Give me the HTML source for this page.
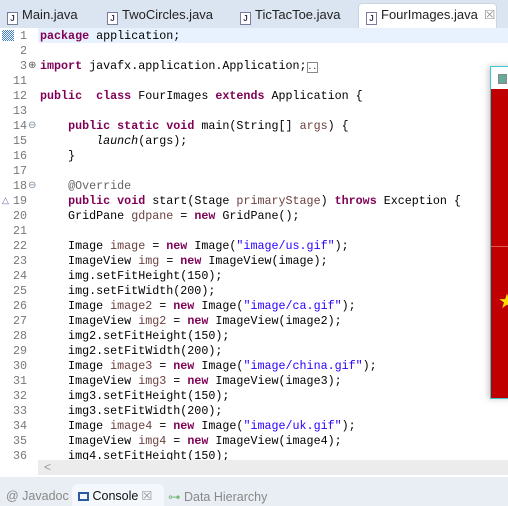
<!DOCTYPE html><html><head><style>
body{margin:0;width:508px;height:506px;overflow:hidden;background:#e9eef5;font-family:"Liberation Sans",sans-serif;position:relative}
.tabs{position:absolute;left:0;top:0;width:508px;height:28px;background:#dbe5f1;border-bottom:1px solid #c9d5e3}
.tab{position:absolute;top:7px;font-size:13px;color:#222;white-space:nowrap}
.ic{display:inline-block;width:9px;height:11px;border:1px solid #7a7a9a;background:#fff;vertical-align:-2px;margin-right:4px;font-size:8px;line-height:11px;text-align:center;color:#335;font-weight:bold}
.act{position:absolute;left:358px;top:3px;width:137px;height:26px;background:#fff;border:1px solid #c9d5e3;border-bottom:none;border-radius:4px 4px 0 0}
.ed{position:absolute;left:0;top:28px;width:508px;height:449px;background:#fff}
.hl{position:absolute;left:38px;top:0;width:470px;height:15px;background:#e8f2fe}
.code{position:absolute;left:0;top:1px;font-family:"Liberation Mono",monospace;font-size:11.7px;line-height:15px}
.n{position:absolute;left:0;width:27px;text-align:right;color:#787878}
.c{position:absolute;left:40px;white-space:pre}
.row{position:relative;height:15px}
.k{color:#7f0055;font-weight:bold}.s{color:#2a00ff}.v{color:#6a3e3e}.a{color:#646464}
.sb{position:absolute;left:38px;top:432px;width:470px;height:15px;background:#ececec;color:#999;font-size:12px;line-height:15px;padding-left:6px;box-sizing:border-box}
.win{position:absolute;left:490px;top:66px;width:30px;height:331px;border:1px solid #3cc8d0;background:#fff;box-shadow:-2px 0 6px rgba(0,0,0,.2)}
.red{position:absolute;left:0;top:22px;width:100%;height:309px;background:#c00000}
.bot{position:absolute;left:0;top:489px;font-size:12.5px;color:#888;white-space:nowrap}
</style></head><body>
<div class="tabs">
<div class="act"></div>
<div class="tab" style="left:7px"><span class="ic">J</span>Main.java</div>
<div class="tab" style="left:107px"><span class="ic">J</span>TwoCircles.java</div>
<div class="tab" style="left:240px"><span class="ic">J</span>TicTacToe.java</div>
<div class="tab" style="left:366px"><span class="ic">J</span>FourImages.java <span style="color:#888;margin-left:3px">⮽</span></div>
</div>
<div class="ed">
<div class="hl"></div>
<div style="position:absolute;left:2px;top:2px;width:12px;height:11px;background:repeating-conic-gradient(#3a7fd0 0 25%,#fff 0 50%) 0 0/2px 2px"></div>
<div class="code">
<div class="row"><span class="n">1</span><span class="c"><span class="k">package</span> application;</span></div>
<div class="row"><span class="n">2</span></div>
<div class="row"><span class="n">3</span><span style="position:absolute;left:28px;color:#555;font-size:10px">⊕</span><span class="c"><span class="k">import</span> javafx.application.Application;<span style="border:1px solid #888;font-size:8px">..</span></span></div>
<div class="row"><span class="n">11</span></div>
<div class="row"><span class="n">12</span><span class="c"><span class="k">public</span>  <span class="k">class</span> FourImages <span class="k">extends</span> Application {</span></div>
<div class="row"><span class="n">13</span></div>
<div class="row"><span class="n">14</span><span style="position:absolute;left:28px;color:#789;font-size:10px">⊖</span><span class="c">    <span class="k">public</span> <span class="k">static</span> <span class="k">void</span> main(String[] <span class="v">args</span>) {</span></div>
<div class="row"><span class="n">15</span><span class="c">        <i>launch</i>(args);</span></div>
<div class="row"><span class="n">16</span><span class="c">    }</span></div>
<div class="row"><span class="n">17</span></div>
<div class="row"><span class="n">18</span><span style="position:absolute;left:28px;color:#789;font-size:10px">⊖</span><span class="c">    <span class="a">@Override</span></span></div>
<div class="row"><span class="n">19</span><span style="position:absolute;left:2px;color:#6060b0;font-size:9px">△</span><span class="c">    <span class="k">public</span> <span class="k">void</span> start(Stage <span class="v">primaryStage</span>) <span class="k">throws</span> Exception {</span></div>
<div class="row"><span class="n">20</span><span class="c">    GridPane <span class="v">gdpane</span> = <span class="k">new</span> GridPane();</span></div>
<div class="row"><span class="n">21</span></div>
<div class="row"><span class="n">22</span><span class="c">    Image <span class="v">image</span> = <span class="k">new</span> Image(<span class="s">"image/us.gif"</span>);</span></div>
<div class="row"><span class="n">23</span><span class="c">    ImageView <span class="v">img</span> = <span class="k">new</span> ImageView(image);</span></div>
<div class="row"><span class="n">24</span><span class="c">    img.setFitHeight(150);</span></div>
<div class="row"><span class="n">25</span><span class="c">    img.setFitWidth(200);</span></div>
<div class="row"><span class="n">26</span><span class="c">    Image <span class="v">image2</span> = <span class="k">new</span> Image(<span class="s">"image/ca.gif"</span>);</span></div>
<div class="row"><span class="n">27</span><span class="c">    ImageView <span class="v">img2</span> = <span class="k">new</span> ImageView(image2);</span></div>
<div class="row"><span class="n">28</span><span class="c">    img2.setFitHeight(150);</span></div>
<div class="row"><span class="n">29</span><span class="c">    img2.setFitWidth(200);</span></div>
<div class="row"><span class="n">30</span><span class="c">    Image <span class="v">image3</span> = <span class="k">new</span> Image(<span class="s">"image/china.gif"</span>);</span></div>
<div class="row"><span class="n">31</span><span class="c">    ImageView <span class="v">img3</span> = <span class="k">new</span> ImageView(image3);</span></div>
<div class="row"><span class="n">32</span><span class="c">    img3.setFitHeight(150);</span></div>
<div class="row"><span class="n">33</span><span class="c">    img3.setFitWidth(200);</span></div>
<div class="row"><span class="n">34</span><span class="c">    Image <span class="v">image4</span> = <span class="k">new</span> Image(<span class="s">"image/uk.gif"</span>);</span></div>
<div class="row"><span class="n">35</span><span class="c">    ImageView <span class="v">img4</span> = <span class="k">new</span> ImageView(image4);</span></div>
<div class="row"><span class="n">36</span><span class="c">    img4.setFitHeight(150);</span></div>
</div>
<div class="sb">&lt;</div>
</div>
<div class="win"><div style="position:absolute;left:7px;top:7px;width:7px;height:8px;background:#6a9;border:1px solid #888"></div><div class="red"><div style="position:absolute;left:0;top:157px;width:100%;height:1px;background:#d55"></div><div style="position:absolute;left:7px;top:200px;color:#ffde00;font-size:20px">★</div></div></div>
<div style="position:absolute;left:72px;top:484px;width:92px;height:22px;background:#f4f7fb;border-radius:5px 5px 0 0"></div>
<div class="bot" style="left:6px">@ Javadoc</div>
<div class="bot" style="left:78px;color:#111"><span style="display:inline-block;width:11px;height:9px;border:2px solid #2c5aa0;box-sizing:border-box;vertical-align:-1px"></span> Console <span style="color:#888">⮽</span></div>
<div class="bot" style="left:168px"><span style="color:#7b7">⊶</span> Data Hierarchy</div>
</body></html>
